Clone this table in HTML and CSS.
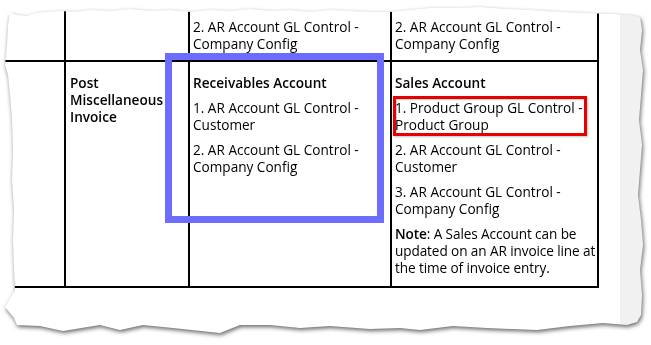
FILE: index.html
```html
<!DOCTYPE html>
<html lang="en">
<head>
<meta charset="utf-8">
<title>Posting rules</title>
<link rel="stylesheet" href="styles.css">
</head>
<body>
<div class="stage">
  <div class="sheet-shadow">
    <div class="sheet">
      <table class="grid">
        <colgroup>
          <col class="c1"><col class="c2"><col class="c3"><col class="c4">
        </colgroup>
        <tr class="row-top">
          <td></td>
          <td></td>
          <td><p>2. AR Account GL Control - Company Config</p></td>
          <td><p>2. AR Account GL Control - Company Config</p></td>
        </tr>
        <tr class="row-main">
          <td></td>
          <td class="name"><p class="strong">Post Miscellaneous Invoice</p></td>
          <td>
            <p class="strong">Receivables Account</p>
            <p>1. AR Account GL Control - Customer</p>
            <p>2. AR Account GL Control - Company Config</p>
          </td>
          <td>
            <p class="strong">Sales Account</p>
            <p>1. Product Group GL Control - Product Group</p>
            <p>2. AR Account GL Control - Customer</p>
            <p>3. AR Account GL Control - Company Config</p>
            <p class="note"><b>Note</b>: A Sales Account can be<br>updated on an AR invoice line at<br>the time of invoice entry.</p>
          </td>
        </tr>
      </table>
    </div>
  </div>
  <div class="mark mark-blue"></div>
  <div class="mark mark-red"></div>
</div>
</body>
</html>
```
FILE: styles.css
```css
html, body {
  margin: 0;
  padding: 0;
  background: #ffffff;
}

.stage {
  position: relative;
  width: 651px;
  height: 345px;
  overflow: hidden;
  background: #ffffff;
}

.sheet-shadow {
  width: 651px;
  height: 345px;
  filter: drop-shadow(1px 2px 2px rgba(0, 0, 0, 0.6));
}

.sheet {
  width: 651px;
  height: 345px;
  background: linear-gradient(to right, #ffffff 0, #ffffff 620px, #f1f1f1 620px, #f1f1f1 100%);
  clip-path: polygon(
    10px 13px, 18px 15px, 27px 16px, 36px 13px, 45px 12px, 60px 11px, 75px 12px, 90px 10px,
    110px 11px, 130px 9px, 150px 11px, 170px 10px, 190px 12px, 210px 10px, 230px 11px,
    250px 9px, 270px 11px, 290px 10px, 310px 12px, 330px 10px, 350px 11px, 370px 12px,
    390px 12px, 410px 10px, 430px 8px, 455px 8px, 480px 7px, 505px 9px, 530px 10px,
    560px 12px, 585px 13px, 610px 14px, 630px 15px, 640px 17px,
    642px 30px, 640px 50px, 643px 70px, 641px 95px, 639px 120px, 642px 145px, 640px 170px,
    638px 195px, 641px 220px, 643px 245px, 640px 270px, 642px 295px, 641px 315px, 637px 322px,
    627px 325px, 603px 323px, 570px 326px, 537px 330px, 487px 328px, 453px 326px,
    420px 330px, 400px 328px, 370px 329px, 330px 326px, 300px 328px, 270px 325px,
    240px 325px, 220px 333px, 173px 328px, 143px 325px, 120px 330px, 100px 325px,
    63px 331px, 40px 326px, 17px 325px,
    14px 318px, 5px 307px, 15px 290px, 14px 270px, 13px 240px, 14px 210px, 12px 180px,
    13px 150px, 12px 120px, 10px 95px, 8px 75px, 5px 65px, 7px 45px, 8px 25px
  );
}

.grid {
  table-layout: fixed;
  width: 599px;
  border-collapse: separate;
  border-spacing: 0;
  font-family: "Open Sans", "Noto Sans", sans-serif;
  font-size: 13.6px;
  line-height: 17px;
  color: #000000;
}

.c1 { width: 66px; }
.c2 { width: 124px; }
.c3 { width: 202px; }
.c4 { width: 207px; }

.grid td {
  border-right: 2px solid #000000;
  border-bottom: 2px solid #000000;
  padding: 12px 2px 10px 3px;
  vertical-align: top;
}

.grid td.name {
  padding-left: 4px;
}

.row-top td {
  height: 62px;
  box-sizing: border-box;
  padding-top: 0;
  padding-bottom: 8px;
  vertical-align: bottom;
}

.row-main td {
  height: 226px;
  box-sizing: border-box;
}

.grid p {
  margin: 0 0 8px 0;
}

.grid p:last-child {
  margin-bottom: 0;
}

.grid .note {
  white-space: nowrap;
  letter-spacing: -0.1px;
}

.strong,
.grid b {
  font-weight: 600;
}

.mark {
  position: absolute;
  box-sizing: border-box;
}

.mark-blue {
  left: 165px;
  top: 53px;
  width: 219px;
  height: 170px;
  border: 7px solid #6c6cff;
}

.mark-red {
  left: 393px;
  top: 96px;
  width: 194px;
  height: 40px;
  border: 3px solid #e60000;
  box-shadow: 1px 1px 2px rgba(0, 0, 0, 0.25), inset 1px 1px 1px rgba(0, 0, 0, 0.2);
}
```
